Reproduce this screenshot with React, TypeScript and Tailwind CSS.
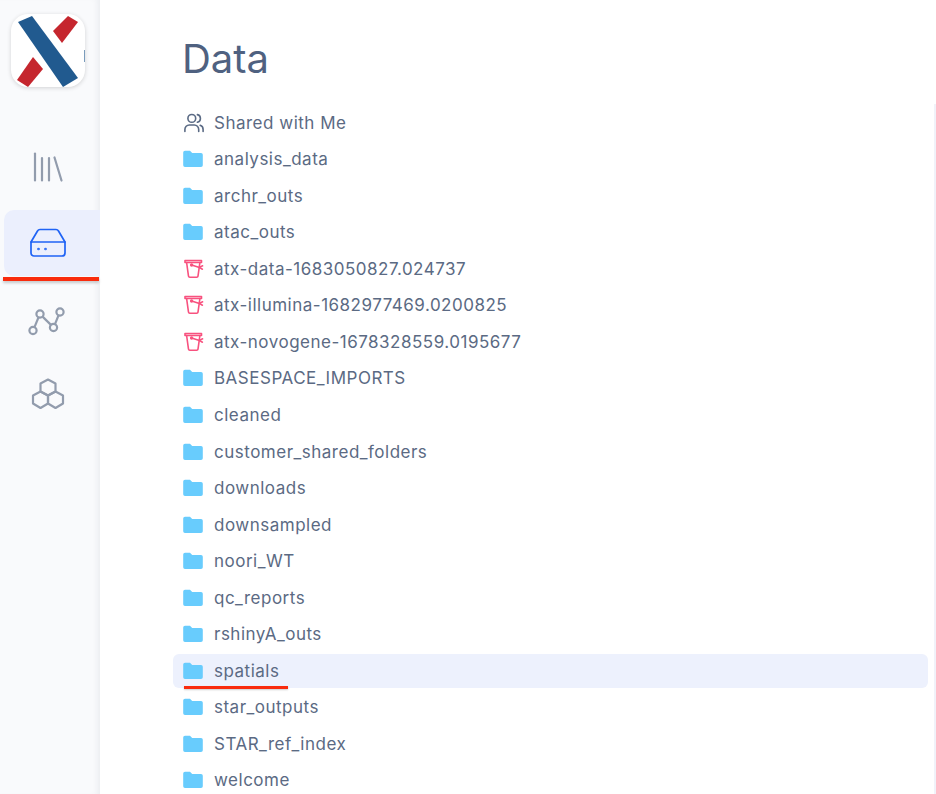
import React from "react";

const Folder = () => (
  <svg width="20" height="18" viewBox="0 0 20 18" className="-ml-[1px] mr-[1px] shrink-0">
    <path d="M0.2 2.6 a1.8 1.8 0 0 1 1.8-1.8 h5 l2.2 2.2 h8.8 a1.8 1.8 0 0 1 1.8 1.8 v10.4 a1.8 1.8 0 0 1-1.8 1.8 h-16 a1.8 1.8 0 0 1-1.8-1.8 z" fill="#68ccfd" />
  </svg>
);

const Bucket = () => (
  <svg width="20" height="20" viewBox="0 0 20 20" fill="none" stroke="#f8527f" strokeWidth="1.6" strokeLinecap="round" strokeLinejoin="round" className="shrink-0">
    <path d="M1 1.5 h16.5 v2 h-16.5 z" />
    <path d="M2.6 3.5 l1.9 13.6 a1.3 1.3 0 0 0 1.3 1.1 h6.9 a1.3 1.3 0 0 0 1.3-1.1 l1.9-13.6" />
    <circle cx="7.6" cy="6" r="0.9" fill="#f8527f" />
    <path d="M7.6 6 L15.4 8.4" />
    <path d="M15.4 8.4 L18.6 6.8" />
    <path d="M15.4 8.4 L18.4 10.2" />
  </svg>
);

const Users = () => (
  <svg width="20" height="20" viewBox="0 0 20 20" fill="none" stroke="#5a6a84" strokeWidth="1.6" strokeLinecap="round" strokeLinejoin="round" className="shrink-0">
    <circle cx="7.8" cy="5.4" r="3.9" />
    <path d="M0.9 18.4 v-2 a4.4 4.4 0 0 1 4.4-4.4 h5 a4.4 4.4 0 0 1 4.4 4.4 v2" />
    <path d="M13.4 1.6 a3.9 3.9 0 0 1 0 7.6" />
    <path d="M16.2 12.2 a4.4 4.4 0 0 1 2.9 4.2 v2" />
  </svg>
);

type Row = { name: string; icon: "users" | "folder" | "bucket"; active?: boolean };

const rows: Row[] = [
  { name: "Shared with Me", icon: "users" },
  { name: "analysis_data", icon: "folder" },
  { name: "archr_outs", icon: "folder" },
  { name: "atac_outs", icon: "folder" },
  { name: "atx-data-1683050827.024737", icon: "bucket" },
  { name: "atx-illumina-1682977469.0200825", icon: "bucket" },
  { name: "atx-novogene-1678328559.0195677", icon: "bucket" },
  { name: "BASESPACE_IMPORTS", icon: "folder" },
  { name: "cleaned", icon: "folder" },
  { name: "customer_shared_folders", icon: "folder" },
  { name: "downloads", icon: "folder" },
  { name: "downsampled", icon: "folder" },
  { name: "noori_WT", icon: "folder" },
  { name: "qc_reports", icon: "folder" },
  { name: "rshinyA_outs", icon: "folder" },
  { name: "spatials", icon: "folder", active: true },
  { name: "star_outputs", icon: "folder" },
  { name: "STAR_ref_index", icon: "folder" },
  { name: "welcome", icon: "folder" },
];

export default function App() {
  return (
    <div className="flex h-[794px] w-[936px] overflow-hidden bg-white font-['Inter',sans-serif]">
      <aside className="relative flex h-full w-[100px] shrink-0 flex-col bg-[#f9fafc] shadow-[inset_-6px_0_6px_-4px_rgba(30,40,70,0.07)]">
        <div className="ml-[11px] mt-[14px] h-[73px] w-[74px] overflow-hidden rounded-[17px] bg-white shadow-[0_1px_4px_rgba(0,0,0,0.16)]">
          <svg width="74" height="73" viewBox="0 0 74 73">
            <polygon points="7,8 21,2 67,64 52,73" fill="#215a8f" />
            <polygon points="42,17 57,2 67,8 51,29" fill="#c5262e" />
            <polygon points="22,43 32,55 17,73 6,66" fill="#c5262e" />
            <polygon points="73,36 74,36 74,48 73,48" fill="#215a8f" fillOpacity="0.6" />
          </svg>
        </div>

        <div className="mt-[50px] flex h-[60px] items-center justify-center pr-[5px]">
          <svg width="30" height="30" viewBox="0 0 30 30" fill="none" stroke="#929cad" strokeWidth="2.2" strokeLinecap="round">
            <path d="M2 1.5 v27" />
            <path d="M9 6 v22.5" />
            <path d="M16 6 v22.5" />
            <path d="M21.5 5.5 L28.5 28.5" />
          </svg>
        </div>

        <div className="ml-[4px] mt-[13px] flex h-[66px] w-[96px] items-center justify-center rounded-l-[10px] bg-[#ebeffd] pr-[8px]">
          <svg width="36" height="30" viewBox="0 0 36 30" fill="none" stroke="#1f63f5" strokeWidth="1.7" strokeLinecap="round" strokeLinejoin="round">
            <path d="M1 14 L7.5 3 a3 3 0 0 1 2.5-1.5 h16 a3 3 0 0 1 2.5 1.5 L35 14" />
            <path d="M1 14 h34 v11 a3 3 0 0 1-3 3 h-28 a3 3 0 0 1-3-3 z" />
            <circle cx="8.5" cy="21" r="0.5" />
            <circle cx="15.5" cy="21" r="0.5" />
          </svg>
        </div>

        <div className="mt-[25px] flex h-[40px] items-center justify-center pr-[6px]">
          <svg width="38" height="30" viewBox="0 0 38 30" fill="none" stroke="#929cad" strokeWidth="2.2">
            <circle cx="5" cy="24.5" r="3.6" />
            <circle cx="12" cy="8" r="3.6" />
            <circle cx="25.5" cy="21.5" r="3.6" />
            <circle cx="32" cy="6" r="3.6" />
            <path d="M6.5 21.2 L10.5 11.3" />
            <path d="M14.6 10.6 L22.9 18.9" />
            <path d="M27 18.2 L30.5 9.3" />
          </svg>
        </div>

        <div className="mt-[33px] flex h-[40px] items-center justify-center pr-[5px]">
          <svg width="34" height="32" viewBox="0 0 34 32" fill="none" stroke="#929cad" strokeWidth="2.2" strokeLinejoin="round">
            <path d="M17 1.5 L24.5 5.5 V13.5 L17 17.5 L9.5 13.5 V5.5 Z" />
            <path d="M9.5 13.5 L17 17.5 V25.5 L9.5 30 L2 25.5 V17.5 Z" />
            <path d="M24.5 13.5 L32 17.5 V25.5 L24.5 30 L17 25.5 V17.5 Z" />
          </svg>
        </div>

        <div className="absolute left-[3px] top-[277px] h-[4px] w-[96px] bg-[#f92b0d] shadow-[0_2px_3px_rgba(0,0,0,0.2)]" />
      </aside>

      <main className="relative flex-1 pl-[73px]">
        <h1 className="ml-[9px] mt-[34px] text-[40px] font-normal leading-[50px] text-[#4f6180]">Data</h1>
        <div className="absolute right-0 top-[104px] bottom-0 w-[2px] bg-[#f1f2f9]" />
        <ul className="mt-[21.6px] flex w-[755px] flex-col gap-[2.55px]">
          {rows.map((r) => (
            <li
              key={r.name}
              className={`relative flex h-[34px] items-center gap-[10px] rounded-[6px] pl-[11px] text-[17px] leading-[24px] tracking-[0.5px] text-[#5b6a83] ${
                r.active ? "bg-[#edf1fd]" : ""
              }`}
            >
              {r.icon === "users" ? <Users /> : r.icon === "bucket" ? <Bucket /> : <Folder />}
              <span>{r.name}</span>
              {r.active ? (
                <div className="absolute left-[11px] top-[32px] h-[3px] w-[104px] bg-[#f92b0d] shadow-[0_1px_2px_rgba(0,0,0,0.2)]" />
              ) : null}
            </li>
          ))}
        </ul>
      </main>
    </div>
  );
}
